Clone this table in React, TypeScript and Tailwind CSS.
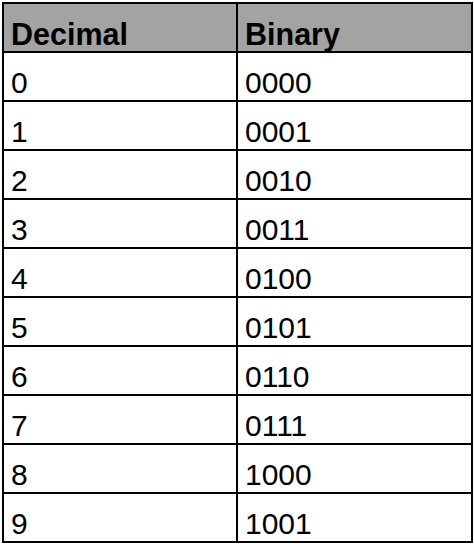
const rows = [
  ["0", "0000"],
  ["1", "0001"],
  ["2", "0010"],
  ["3", "0011"],
  ["4", "0100"],
  ["5", "0101"],
  ["6", "0110"],
  ["7", "0111"],
  ["8", "1000"],
  ["9", "1001"],
]

export default function App() {
  return (
    <main className="bg-white w-[474px] h-[544px] pt-[2px] pl-[2px] font-['Liberation_Sans',Arial,sans-serif] text-black">
      <div className="grid grid-cols-[232px_233px] gap-[2px] p-[2px] bg-black w-[471px]">
        {/* Header */}
        <div className="flex items-end h-[47px] bg-[#a3a3a3] pl-[7px] font-bold text-[30.5px] leading-[34px]">Decimal</div>
        <div className="flex items-end h-[47px] bg-[#a3a3a3] pl-[7px] font-bold text-[30.5px] leading-[34px]">Binary</div>

        {rows.map(([dec, bin]) => (
          <div key={dec} className="contents">
            <div className="flex items-end h-[47px] bg-white pl-[7px] text-[30px] leading-[34px]">{dec}</div>
            <div className="flex items-end h-[47px] bg-white pl-[7px] text-[30px] leading-[34px]">{bin}</div>
          </div>
        ))}
      </div>
    </main>
  )
}
